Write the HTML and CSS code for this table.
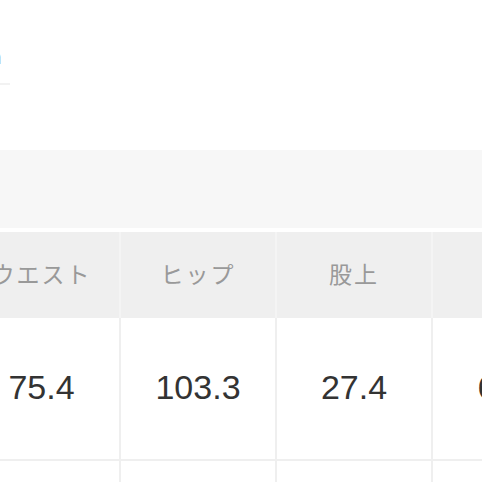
FILE: index.html
```html
<!DOCTYPE html>
<html lang="ja">
<head>
<meta charset="utf-8">
<link rel="stylesheet" href="styles.css">
</head>
<body>
<div class="page">
  <div class="intro">
    <p class="note">cm</p>
    <div class="rule"></div>
  </div>
  <div class="band"></div>
  <table class="sizes">
    <colgroup><col><col><col><col></colgroup>
    <thead>
      <tr><th>ウエスト</th><th>ヒップ</th><th>股上</th><th>股下</th></tr>
    </thead>
    <tbody>
      <tr><td>75.4</td><td>103.3</td><td>27.4</td><td>64.5</td></tr>
      <tr class="next"><td></td><td></td><td></td><td></td></tr>
    </tbody>
  </table>
</div>
</body>
</html>
```

FILE: styles.css
```css
html, body {
  margin: 0;
  padding: 0;
  background: #ffffff;
  overflow: hidden;
}
.page {
  width: 482px;
  height: 482px;
  overflow: hidden;
  font-family: "Noto Sans CJK JP", "Liberation Sans", sans-serif;
}
.intro {
  height: 150px;
  padding-top: 44px;
  box-sizing: border-box;
}
.note {
  margin: 0 0 0 -27px;
  font-size: 20px;
  line-height: 24px;
  color: #555;
}
.rule {
  margin-top: 15px;
  width: 10px;
  height: 2px;
  background: #f2f2f2;
}
.band {
  height: 78px;
  background: #f7f7f7;
  margin-bottom: 4px;
}
.sizes {
  margin-left: -36px;
  border-collapse: collapse;
  table-layout: fixed;
  width: 624px;
}
.sizes col { width: 156px; }
.sizes th {
  height: 82px;
  padding: 0 0 4px;
  background: #efefef;
  border-left: 2px solid #f4f4f4;
  color: #999;
  font-size: 23px;
  font-weight: 400;
  letter-spacing: 2px;
  text-align: center;
  vertical-align: middle;
}
.sizes th:first-child { border-left: none; }
.sizes td {
  height: 139px;
  padding: 0 0 2px;
  border-left: 2px solid #efefef;
  border-bottom: 2px solid #efefef;
  font-family: "Liberation Sans", "Noto Sans CJK JP", sans-serif;
  font-size: 34px;
  color: #333;
  text-align: center;
  vertical-align: middle;
}
.sizes td:first-child { border-left: none; }
.sizes tr.next td { height: 40px; border-bottom: none; }
```
